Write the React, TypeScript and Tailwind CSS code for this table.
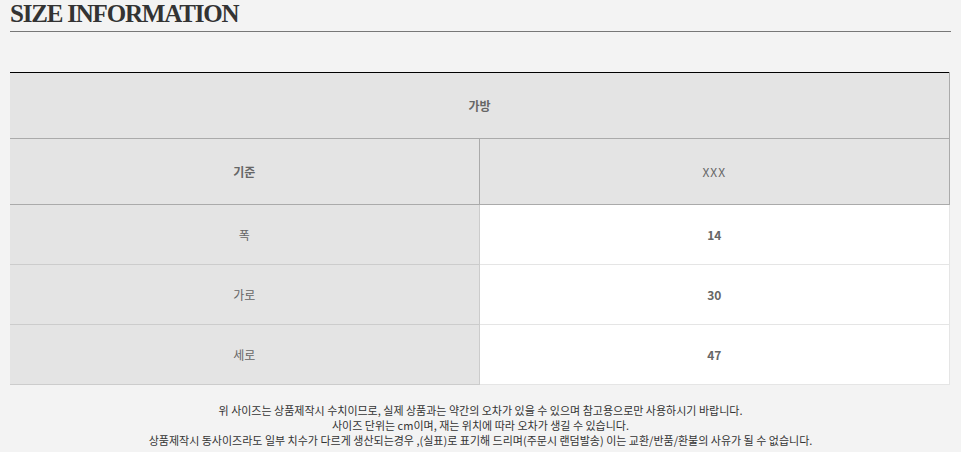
import React from 'react';

const rows = [
  { label: '폭', value: '14' },
  { label: '가로', value: '30' },
  { label: '세로', value: '47' },
];

const notes = [
  '위 사이즈는 상품제작시 수치이므로, 실제 상품과는 약간의 오차가 있을 수 있으며 참고용으로만 사용하시기 바랍니다.',
  '사이즈 단위는 cm이며, 재는 위치에 따라 오차가 생길 수 있습니다.',
  '상품제작시 동사이즈라도 일부 치수가 다르게 생산되는경우 ,(실표)로 표기해 드리며(주문시 랜덤발송) 이는 교환/반품/환불의 사유가 될 수 없습니다.',
];

export default function App() {
  return (
    <div className="min-h-[452px] bg-[#f3f3f3] px-[10px] pt-[1px] font-['Noto_Sans_CJK_KR',sans-serif]">
      {/* Title */}
      <div className="border-b border-[#777] pb-[5px]">
        <h2 className="font-['Liberation_Serif',serif] text-[25px] font-bold leading-[25px] tracking-[-1.2px] text-[#333]">
          SIZE INFORMATION
        </h2>
      </div>

      {/* Size table */}
      <table className="mt-[40px] w-[940px] border-collapse border-t border-black text-[12px] text-[#666]">
        <tbody>
          <tr className="h-[66px] bg-[#e4e4e4]">
            <th colSpan={2} className="border-b border-r border-[#aaa] font-bold">
              가방
            </th>
          </tr>
          <tr className="h-[66px] bg-[#e4e4e4]">
            <th className="w-[469px] border-b border-r border-[#aaa] font-bold">기준</th>
            <th className="border-b border-r border-[#aaa] font-normal tracking-[1px]">XXX</th>
          </tr>
          {rows.map((r) => (
            <tr key={r.label} className="h-[60px]">
              <td className="border-b border-r border-[#ccc] bg-[#e4e4e4] text-center">{r.label}</td>
              <td className="border-b border-r border-[#e5e5e5] bg-white text-center font-bold">{r.value}</td>
            </tr>
          ))}
        </tbody>
      </table>

      {/* Notes */}
      <div className="mt-[18px] text-center text-[11px] leading-[15px] text-[#333]">
        {notes.map((n) => (
          <p key={n}>{n}</p>
        ))}
      </div>
    </div>
  );
}
